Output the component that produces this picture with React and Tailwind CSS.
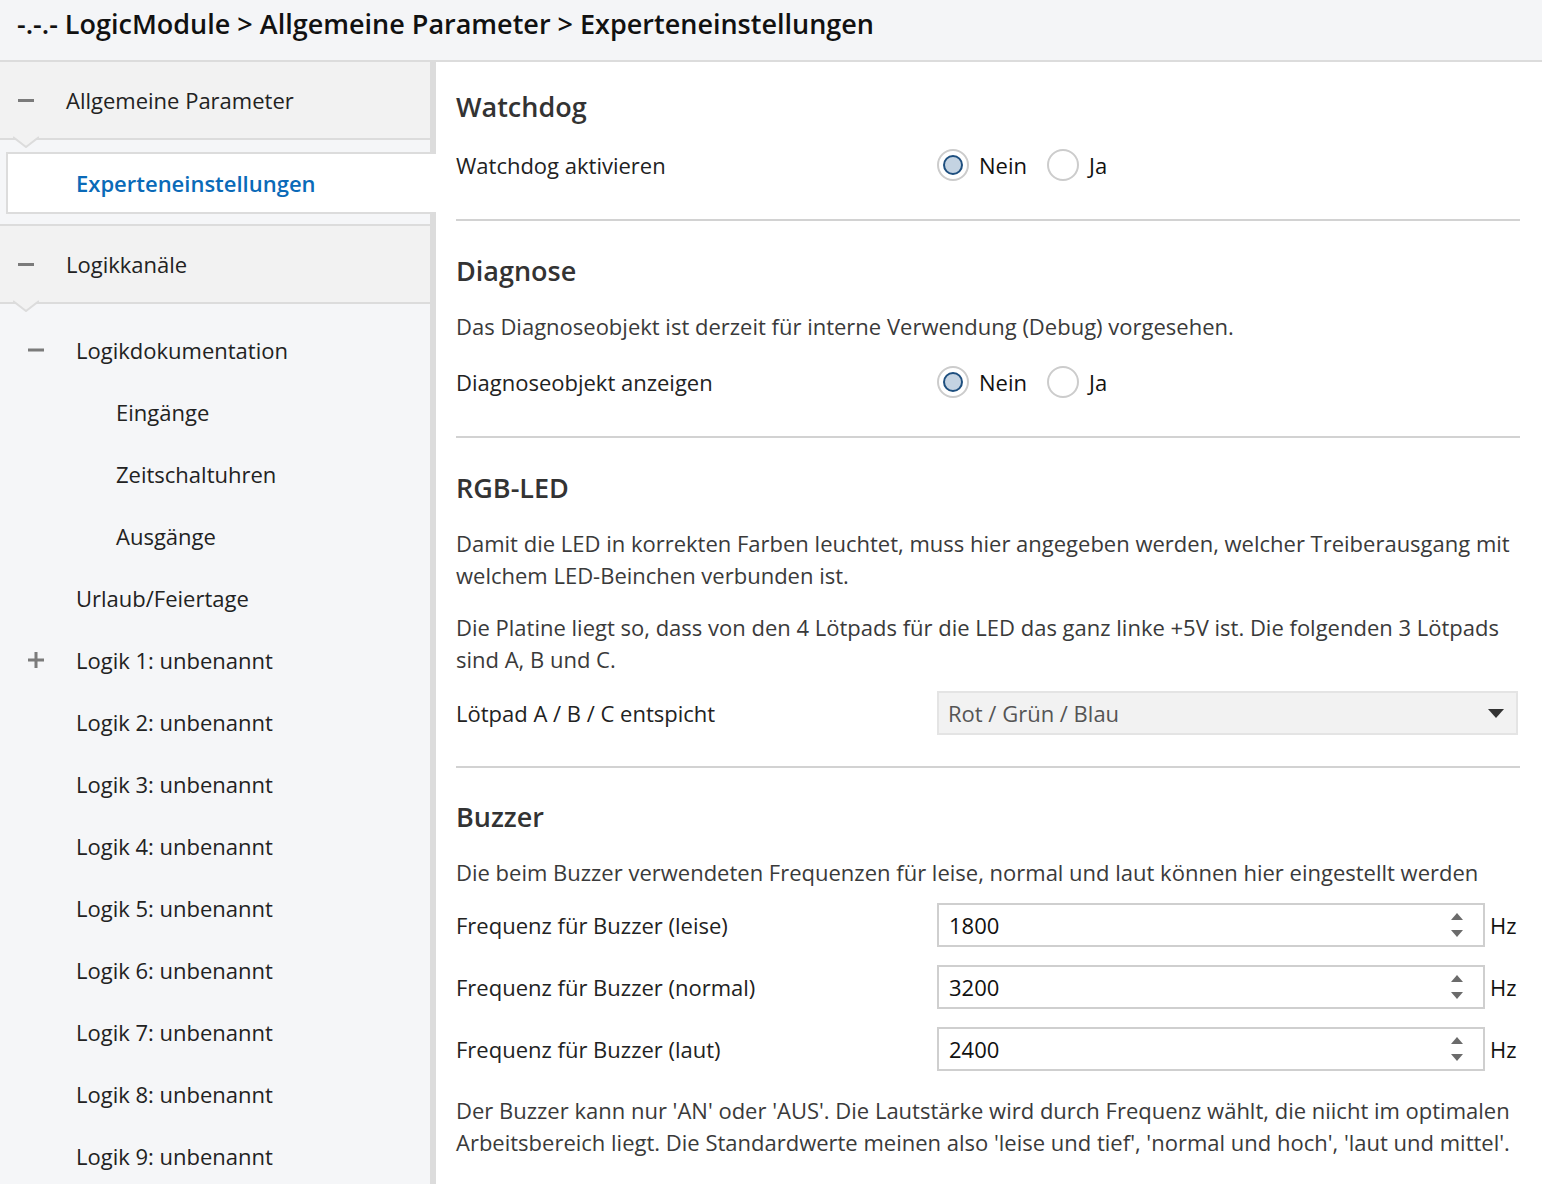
import React from 'react';

const font = { fontFamily: '"Open Sans", "Noto Sans", sans-serif' };

const Minus = ({ className = '' }) => (
  <span className={`block w-4 h-[3px] bg-[#7b7b7b] ${className}`} />
);

const Plus = () => (
  <svg width="16" height="16" viewBox="0 0 16 16" className="block">
    <rect x="0" y="6.5" width="16" height="3" fill="#7b7b7b" />
    <rect x="6.5" y="0" width="3" height="16" fill="#7b7b7b" />
  </svg>
);

const Notch = () => (
  <svg width="26" height="12" viewBox="0 0 26 12" className="absolute left-[13px] top-full -mt-[2px] z-10">
    <polygon points="0,0 13,11 26,0" fill="#f2f2f2" />
    <polyline points="0,1 13,11 26,1" fill="none" stroke="#dcdcdc" strokeWidth="2" />
  </svg>
);

const SectionRow = ({ label }) => (
  <div className="relative shrink-0 h-[78px] bg-[#f2f2f2] border-b-2 border-[#dcdcdc] flex items-center">
    <Minus className="ml-[18px]" />
    <span className="ml-[32px] text-[22px] text-[#222]">{label}</span>
    <Notch />
  </div>
);

const TreeItem = ({ label, indent = 76, icon }) => (
  <div className="relative shrink-0 h-[62px] flex items-center text-[22px] text-[#222]">
    {icon && <span className="absolute left-[28px] top-1/2 -translate-y-1/2">{icon}</span>}
    <span style={{ marginLeft: indent }}>{label}</span>
  </div>
);

const Radio = ({ checked, label }) => (
  <div className="flex items-center">
    <span className="w-8 h-8 rounded-full border-2 border-[#cccccc] bg-white flex items-center justify-center">
      {checked && <span className="w-5 h-5 rounded-full border-2 border-[#1e4f7f] bg-[#c4d3e2]" />}
    </span>
    <span className="ml-[10px] text-[22px] text-[#111]">{label}</span>
  </div>
);

const RadioRow = ({ label, className = '' }) => (
  <div className={`h-[62px] flex items-center ${className}`}>
    <div className="w-[481px] text-[22px] text-[#222]">{label}</div>
    <div className="flex items-center gap-[20px]">
      <Radio checked label="Nein" />
      <Radio label="Ja" />
    </div>
  </div>
);

const Heading = ({ children, className = '' }) => (
  <h2 className={`h-[40px] leading-[40px] text-[27px] font-semibold text-[#333] ${className}`}>{children}</h2>
);

const Divider = ({ className = '' }) => <div className={`h-[2px] bg-[#d2d2d2] ${className}`} />;

const NumberRow = ({ label, value }) => (
  <div className="h-[62px] flex items-center">
    <div className="w-[481px] text-[22px] text-[#222]">{label}</div>
    <div className="w-[548px] h-[44px] border-2 border-[#cfcfcf] bg-white flex items-center justify-between pl-[10px] pr-[20px]">
      <span className="text-[22px] text-[#111]">{value}</span>
      <svg width="12" height="28" viewBox="0 0 12 28">
        <polygon points="6,2 12,9 0,9" fill="#6b6b6b" />
        <polygon points="0,19 12,19 6,26" fill="#6b6b6b" />
      </svg>
    </div>
    <span className="ml-[5px] text-[22px] text-[#111]">Hz</span>
  </div>
);

export default function App() {
  const logiks = [1, 2, 3, 4, 5, 6, 7, 8, 9];
  return (
    <div style={font} className="w-[1542px] h-[1184px] overflow-hidden bg-white flex flex-col">
      <header className="h-[62px] shrink-0 bg-[#f4f5f7] border-b-2 border-[#dcdcdc] flex items-center pl-[17px] pb-[12px]">
        <h1 className="text-[27px] font-semibold text-[#111]">
          -.-.- LogicModule &gt; Allgemeine Parameter &gt; Experteneinstellungen
        </h1>
      </header>
      <div className="flex flex-1 min-h-0">
        <aside className="w-[436px] shrink-0 bg-[#f5f6f8] border-r-[6px] border-[#dcdcdc] flex flex-col">
          <SectionRow label="Allgemeine Parameter" />
          <div className="relative shrink-0 z-20 mt-[12px] ml-[6px] mr-[-6px] h-[62px] bg-white border-2 border-r-0 border-[#dcdcdc] flex items-center">
            <span className="ml-[68px] text-[22px] font-semibold text-[#0a6ab8]">Experteneinstellungen</span>
          </div>
          <div className="shrink-0 mt-[10px] border-t-2 border-[#dcdcdc]">
            <SectionRow label="Logikkanäle" />
          </div>
          <div className="shrink-0 pt-[15px]">
            <TreeItem label="Logikdokumentation" icon={<Minus />} />
            <TreeItem label="Eingänge" indent={116} />
            <TreeItem label="Zeitschaltuhren" indent={116} />
            <TreeItem label="Ausgänge" indent={116} />
            <TreeItem label="Urlaub/Feiertage" />
            {logiks.map((n) => (
              <TreeItem key={n} label={`Logik ${n}: unbenannt`} icon={n === 1 ? <Plus /> : null} />
            ))}
          </div>
        </aside>
        <main className="flex-1 pl-[20px] pr-[22px]">
          <Heading className="mt-[25px]">Watchdog</Heading>
          <RadioRow label="Watchdog aktivieren" className="mt-[7px]" />
          <Divider className="mt-[23px]" />

          <Heading className="mt-[30px]">Diagnose</Heading>
          <p className="mt-[19px] leading-[32px] text-[22px] text-[#3a3a3a]">
            Das Diagnoseobjekt ist derzeit für interne Verwendung (Debug) vorgesehen.
          </p>
          <RadioRow label="Diagnoseobjekt anzeigen" className="mt-[9px]" />
          <Divider className="mt-[23px]" />

          <Heading className="mt-[30px]">RGB-LED</Heading>
          <p className="mt-[19px] leading-[32px] text-[22px] text-[#3a3a3a] whitespace-nowrap">
            Damit die LED in korrekten Farben leuchtet, muss hier angegeben werden, welcher Treiberausgang mit
            <br />
            welchem LED-Beinchen verbunden ist.
          </p>
          <p className="mt-[20px] leading-[32px] text-[22px] text-[#3a3a3a] whitespace-nowrap">
            Die Platine liegt so, dass von den 4 Lötpads für die LED das ganz linke +5V ist. Die folgenden 3 Lötpads
            <br />
            sind A, B und C.
          </p>
          <div className="mt-[7px] h-[62px] flex items-center">
            <div className="w-[481px] text-[22px] text-[#222]">Lötpad A / B / C entspicht</div>
            <div className="w-[581px] h-[44px] bg-[#f2f2f2] border-2 border-[#e4e4e4] flex items-center justify-between pl-[9px] pr-[12px]">
              <span className="text-[22px] text-[#555]">Rot / Grün / Blau</span>
              <svg width="16" height="9" viewBox="0 0 16 9">
                <polygon points="0,0 16,0 8,9" fill="#333" />
              </svg>
            </div>
          </div>
          <Divider className="mt-[22px]" />

          <Heading className="mt-[29px]">Buzzer</Heading>
          <p className="mt-[19px] leading-[32px] text-[22px] text-[#3a3a3a] whitespace-nowrap">
            Die beim Buzzer verwendeten Frequenzen für leise, normal und laut können hier eingestellt werden
          </p>
          <div className="mt-[6px]">
            <NumberRow label="Frequenz für Buzzer (leise)" value="1800" />
            <NumberRow label="Frequenz für Buzzer (normal)" value="3200" />
            <NumberRow label="Frequenz für Buzzer (laut)" value="2400" />
          </div>
          <p className="mt-[14px] leading-[32px] text-[22px] text-[#3a3a3a] whitespace-nowrap">
            Der Buzzer kann nur 'AN' oder 'AUS'. Die Lautstärke wird durch Frequenz wählt, die niicht im optimalen
            <br />
            Arbeitsbereich liegt. Die Standardwerte meinen also 'leise und tief', 'normal und hoch', 'laut und mittel'.
          </p>
        </main>
      </div>
    </div>
  );
}
